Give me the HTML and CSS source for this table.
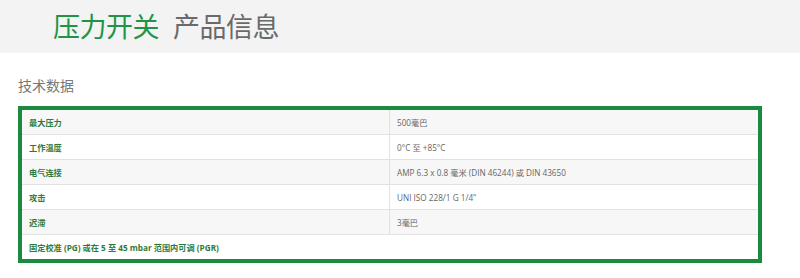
FILE: index.html
```html
<!DOCTYPE html>
<html lang="zh">
<head>
<meta charset="utf-8">
<link rel="stylesheet" href="styles.css">
</head>
<body>
<header class="page-head">
  <h1 class="title"><span class="title-main">压力开关</span><span class="title-sub">产品信息</span></h1>
</header>
<section class="specs">
  <h2 class="specs-title">技术数据</h2>
  <div class="specs-box">
    <table class="specs-table">
      <tr class="odd"><th>最大压力</th><td>500毫巴</td></tr>
      <tr><th>工作温度</th><td>0°C 至 +85°C</td></tr>
      <tr class="odd"><th>电气连接</th><td>AMP 6.3 x 0.8 毫米 (DIN 46244) 或 DIN 43650</td></tr>
      <tr><th>攻击</th><td>UNI ISO 228/1 G 1/4"</td></tr>
      <tr class="odd"><th>迟滞</th><td>3毫巴</td></tr>
      <tr class="last"><th colspan="2">固定校准 (PG) 或在 5 至 45 mbar 范围内可调 (PGR)</th></tr>
    </table>
  </div>
</section>
</body>
</html>
```

FILE: styles.css
```css
html, body {
  margin: 0;
  padding: 0;
  background: #fff;
  font-family: "Open Sans", "Noto Sans CJK SC", sans-serif;
}

.page-head {
  background: #f3f3f3;
  height: 53px;
  padding-left: 53px;
  padding-bottom: 3px;
  box-sizing: border-box;
  display: flex;
  align-items: center;
}

.title {
  margin: 0;
  display: flex;
  gap: 14px;
  font-family: "Noto Sans CJK SC", sans-serif;
  font-size: 27px;
  font-weight: 400;
  line-height: 1;
  letter-spacing: -0.5px;
}

.title-main { color: #1f9447; }
.title-sub { color: #6a6a6a; }

.specs {
  padding: 23px 38px 0 18px;
}

.specs-title {
  margin: 0 0 12px;
  font-family: "Noto Sans CJK SC", sans-serif;
  font-size: 14px;
  font-weight: 400;
  color: #777;
  line-height: 18px;
}

.specs-box {
  border: 4px solid #1b8a3f;
  width: 736px;
}

.specs-table {
  width: 100%;
  border-collapse: collapse;
}

.specs-table th,
.specs-table td {
  height: 24px;
  padding: 0 7px;
  text-align: left;
  font-size: 8.2px;
  border-bottom: 1px solid #e2e2e2;
}

.specs-table th {
  width: 353px;
  color: #2e7a3c;
  font-weight: 700;
  font-family: "Open Sans", "Noto Sans CJK SC", sans-serif;
}

.specs-table td {
  color: #666;
  border-left: 1px solid #e2e2e2;
}

.specs-table tr.odd th,
.specs-table tr.odd td {
  background: #f7f7f7;
}

.specs-table tr.last th {
  border-bottom: 0;
}
```
